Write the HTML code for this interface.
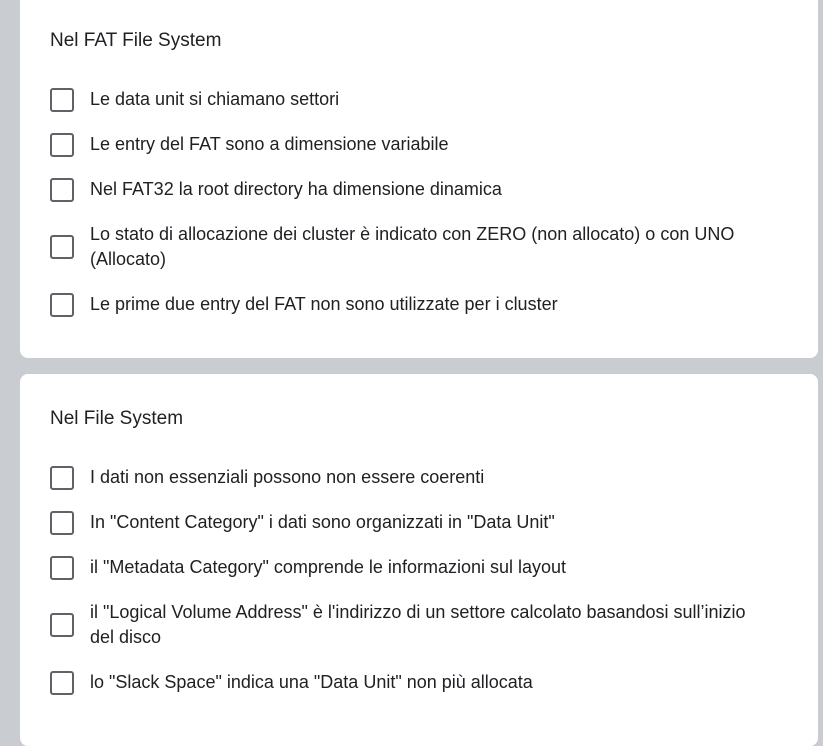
<!DOCTYPE html>
<html><head><style>
body{margin:0;width:823px;height:736px;background:#c9cdd1;position:relative;overflow:hidden;font-family:"Liberation Sans",Arial,sans-serif;color:#202124}
.card{position:absolute;left:20px;width:798px;background:#fff;border-radius:8px}
.t{position:absolute;left:30px;font-size:19px}
.o{position:absolute;left:30px;display:flex;align-items:center}
.cb{width:20px;height:20px;border:2px solid #5f6368;border-radius:3px;flex:none}
.l{margin-left:16px;font-size:18px;line-height:25px;width:665px}
</style></head><body>
<div class="card" style="top:-10px;height:368px">
<div class="t" style="top:40px">Nel FAT File System</div>
<div class="o" style="top:97px"><div class="cb"></div><div class="l">Le data unit si chiamano settori</div></div>
<div class="o" style="top:142px"><div class="cb"></div><div class="l">Le entry del FAT sono a dimensione variabile</div></div>
<div class="o" style="top:187px"><div class="cb"></div><div class="l">Nel FAT32 la root directory ha dimensione dinamica</div></div>
<div class="o" style="top:232px"><div class="cb"></div><div class="l">Lo stato di allocazione dei cluster è indicato con ZERO (non allocato) o con UNO (Allocato)</div></div>
<div class="o" style="top:302px"><div class="cb"></div><div class="l">Le prime due entry del FAT non sono utilizzate per i cluster</div></div>
</div>
<div class="card" style="top:374px;height:372px">
<div class="t" style="top:34px">Nel File System</div>
<div class="o" style="top:91px"><div class="cb"></div><div class="l">I dati non essenziali possono non essere coerenti</div></div>
<div class="o" style="top:136px"><div class="cb"></div><div class="l">In "Content Category" i dati sono organizzati in "Data Unit"</div></div>
<div class="o" style="top:181px"><div class="cb"></div><div class="l">il "Metadata Category" comprende le informazioni sul layout</div></div>
<div class="o" style="top:226px"><div class="cb"></div><div class="l">il "Logical Volume Address" è l'indirizzo di un settore calcolato basandosi sull’inizio del disco</div></div>
<div class="o" style="top:296px"><div class="cb"></div><div class="l">lo "Slack Space" indica una "Data Unit" non più allocata</div></div>
</div>
</body></html>
